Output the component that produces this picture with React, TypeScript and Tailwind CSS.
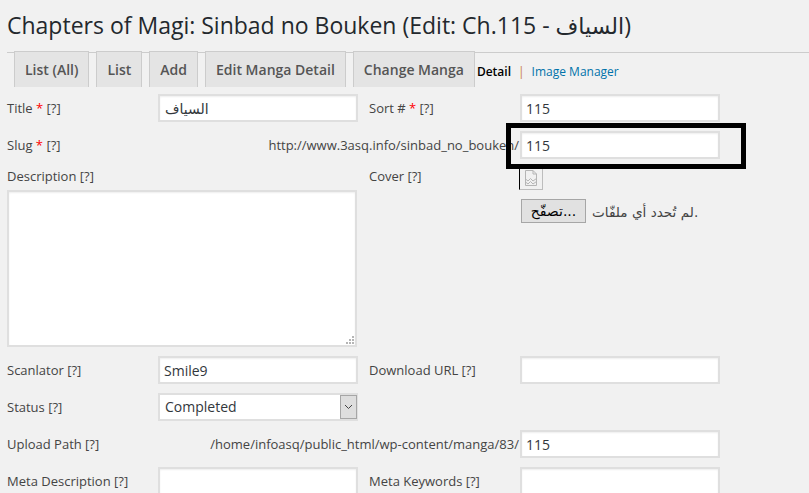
import type { ReactNode } from "react";

const TABS = ["List (All)", "List", "Add", "Edit Manga Detail", "Change Manga"];

const INPUT =
  "h-[28px] w-[200px] border-2 border-[#dfdfdf] bg-white px-[4px] text-[14px] text-[#32373c] outline-none shadow-[inset_0_1px_2px_rgba(0,0,0,0.07)]";

function Req() {
  return <span className="text-[#ff0000]">*</span>;
}

function Label({ children }: { children: ReactNode }) {
  return (
    <div className="w-[151px] shrink-0 whitespace-nowrap text-[13px] leading-[28px] text-[#444]">
      {children}
    </div>
  );
}

function Prefix({ label, prefix }: { label: ReactNode; prefix: string }) {
  return (
    <div className="flex w-[513px] shrink-0 items-center justify-between text-[13px] leading-[28px] text-[#444]">
      <span className="whitespace-nowrap">{label}</span>
      <span className="whitespace-nowrap pr-px">{prefix}</span>
    </div>
  );
}

function Field({ value = "" }: { value?: string }) {
  return <input readOnly value={value} className={INPUT} />;
}

function Row({ children, className = "" }: { children: ReactNode; className?: string }) {
  return <div className={`flex ${className}`}>{children}</div>;
}

export default function App() {
  return (
    <div className="relative h-[493px] w-[809px] overflow-hidden bg-[#f1f1f1] font-['Open_Sans','DejaVu_Sans',sans-serif]">
      <h1 className="h-[52px] whitespace-nowrap pl-[7px] pt-[9px] text-[23px] leading-[33px] text-[#23282d]">
        Chapters of Magi: Sinbad no Bouken (Edit: Ch.115 - <span className="text-[22px]">السياف</span>)
      </h1>

      <div className="ml-[7px] flex h-[34px] items-start border-t border-[#cccccc] pl-[7px]">
        <div className="-mt-[2px] flex gap-[7px]">
          {TABS.map((t) => (
            <div
              key={t}
              className="flex h-[36px] items-center whitespace-nowrap border-x border-t border-[#cccccc] bg-[#e4e4e4] px-[10px] text-[14px] font-semibold text-[#555]"
            >
              {t}
            </div>
          ))}
        </div>
        <div className="mt-[10px] flex whitespace-nowrap pl-[2px] text-[12px] leading-[18px]">
          <span className="font-semibold text-black">Detail</span>
          <span className="px-[7px] text-[#c9803c]">|</span>
          <span className="text-[#0073aa]">Image Manager</span>
        </div>
      </div>

      <div className="mt-[8px] pl-[7px]">
        <Row>
          <Label>
            Title <Req /> [?]
          </Label>
          <input readOnly value="السياف" className={`${INPUT} pl-[5px] text-[13px]`} />
          <div className="ml-[11px]">
            <Label>
              Sort # <Req /> [?]
            </Label>
          </div>
          <Field value="115" />
        </Row>

        <Row className="mt-[9px]">
          <Prefix
            label={
              <>
                Slug <Req /> [?]
              </>
            }
            prefix="http://www.3asq.info/sinbad_no_bouken/"
          />
          <Field value="115" />
        </Row>

        <Row className="mt-[8px]">
          <div className="w-[351px] shrink-0">
            <div className="h-[23px] text-[13px] leading-[18px] text-[#444]">Description [?]</div>
            <div className="relative h-[157px] w-[350px] border-2 border-[#dfdfdf] bg-white shadow-[inset_0_1px_2px_rgba(0,0,0,0.07)]">
              <svg className="absolute bottom-0 right-0" width="10" height="10" viewBox="0 0 10 10">
                <g fill="#b5b5b5">
                  <rect x="7" y="1" width="2" height="2" />
                  <rect x="4" y="4" width="2" height="2" />
                  <rect x="7" y="4" width="2" height="2" />
                  <rect x="1" y="7" width="2" height="2" />
                  <rect x="4" y="7" width="2" height="2" />
                  <rect x="7" y="7" width="2" height="2" />
                </g>
              </svg>
            </div>
          </div>
          <div className="ml-[11px] flex flex-col">
            <div className="flex">
              <div className="w-[150px] shrink-0 text-[13px] leading-[18px] text-[#444]">Cover [?]</div>
              <div className="flex h-[23px] w-[24px] items-center justify-center border-b border-l border-r border-b-[#bdbdbd] border-l-black border-r-[#bdbdbd]">
                <svg width="14" height="16" viewBox="0 0 14 16" fill="none" stroke="#b5b5b5" strokeWidth="1">
                  <path d="M1.5 0.5H9L12.5 4V15.5H1.5Z" />
                  <path d="M9 0.5V4H12.5" />
                  <path d="M1.5 9L4 11L6.5 8.5L9 11L12.5 8.5M1.5 12L4 14L6.5 11.5L9 14L12.5 11.5" />
                </svg>
              </div>
            </div>
            <div className="ml-[152px] mt-[9px] flex items-center">
              <div className="flex h-[24px] w-[65px] items-center justify-center border border-[#a6a6a6] bg-[#e1e1e1] pt-px font-['DejaVu_Sans',sans-serif] text-[14px] text-black">
                <span>تصفّح...</span>
              </div>
              <span className="ml-[6px] whitespace-nowrap pt-[3px] font-['DejaVu_Sans',sans-serif] text-[13.6px] text-[#444]">
                لم تُحدد أي ملفّات.
              </span>
            </div>
          </div>
        </Row>

        <Row className="mt-[9px]">
          <Label>Scanlator [?]</Label>
          <Field value="Smile9" />
          <div className="ml-[11px]">
            <Label>Download URL [?]</Label>
          </div>
          <Field />
        </Row>

        <Row className="mt-[9px]">
          <Label>Status [?]</Label>
          <div className="flex h-[28px] w-[200px] border-2 border-[#dfdfdf] bg-white pl-[5px] text-[14px] leading-[24px] text-[#32373c]">
            <span className="flex-1">Completed</span>
            <div className="-mr-px flex w-[17px] items-center justify-center border border-[#a6a6a6] bg-[#dedede]">
              <svg width="9" height="6" viewBox="0 0 9 6" fill="none" stroke="#444" strokeWidth="1">
                <path d="M1 1L4.5 4.5L8 1" />
              </svg>
            </div>
          </div>
        </Row>

        <Row className="mt-[9px]">
          <Prefix label="Upload Path [?]" prefix="/home/infoasq/public_html/wp-content/manga/83/" />
          <Field value="115" />
        </Row>

        <Row className="mt-[9px]">
          <Label>Meta Description [?]</Label>
          <Field />
          <div className="ml-[11px]">
            <Label>Meta Keywords [?]</Label>
          </div>
          <Field />
        </Row>
      </div>

      {/* annotation box drawn over the screenshot */}
      <div className="pointer-events-none absolute left-[506px] top-[123px] h-[46px] w-[240px] border-[5px] border-black" />
    </div>
  );
}
